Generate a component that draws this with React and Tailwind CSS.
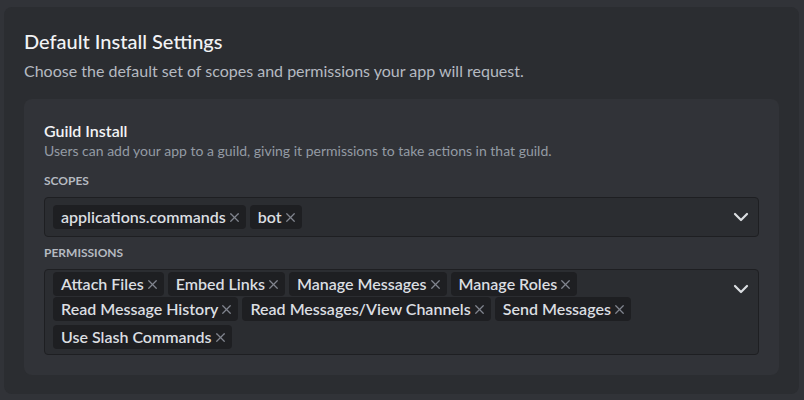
import { ChevronDown, X } from "lucide-react";

const font = { fontFamily: 'Lato, "Noto Sans", sans-serif' };

function Tag({ label }) {
  return (
    <span className="flex h-6 items-center rounded-[4px] bg-[#1e1f22] pl-2 pr-1 text-[16px] font-semibold leading-5 text-[#dbdee1]">
      {label}
      <X className="ml-px h-[15px] w-[15px] text-[#80848e]" strokeWidth={2} />
    </span>
  );
}

export default function App() {
  return (
    <div className="h-[400px] w-[804px] bg-[#313338] pl-1 pr-[5px] pt-[7px]" style={font}>
      <div className="rounded-lg bg-[#2b2d31] px-5 pb-[19px] pt-[22px]">
        <h2 className="text-[20px] font-medium leading-6 text-[#f2f3f5]">Default Install Settings</h2>
        <p className="mt-[8px] text-[16px] leading-5 text-[#b5bac1]">
          Choose the default set of scopes and permissions your app will request.
        </p>
        <div className="mt-[18px] rounded-lg bg-[#313338] px-5 pb-5 pt-[22px]">
          <h3 className="text-[16px] font-semibold leading-5 text-[#f2f3f5]">Guild Install</h3>
          <p className="mt-[1px] text-[14px] leading-[18px] text-[#949ba4]">
            Users can add your app to a guild, giving it permissions to take actions in that guild.
          </p>
          <div className="mt-[13px] text-[12px] font-bold uppercase leading-4 text-[#b5bac1]">Scopes</div>
          <div className="mt-[8px] flex items-center justify-between rounded-[4px] border border-[#1e1f22] bg-[#2b2d31] py-[7px] pl-2 pr-[5px]">
            <div className="flex gap-1">
              <Tag label="applications.commands" />
              <Tag label="bot" />
            </div>
            <ChevronDown className="h-6 w-6 text-[#dbdee1]" strokeWidth={2.2} />
          </div>
          <div className="mt-[8px] text-[12px] font-bold uppercase leading-4 text-[#b5bac1]">Permissions</div>
          <div className="mt-[8px] flex items-start justify-between rounded-[4px] border border-[#1e1f22] bg-[#2b2d31] pb-[5px] pl-2 pr-[5px] pt-[2px]">
            <div className="flex flex-col gap-[1px]">
              <div className="flex gap-1">
                <Tag label="Attach Files" />
                <Tag label="Embed Links" />
                <Tag label="Manage Messages" />
                <Tag label="Manage Roles" />
              </div>
              <div className="flex gap-1">
                <Tag label="Read Message History" />
                <Tag label="Read Messages/View Channels" />
                <Tag label="Send Messages" />
              </div>
              <div className="mt-[3px] flex gap-1">
                <Tag label="Use Slash Commands" />
              </div>
            </div>
            <ChevronDown className="mt-[5px] h-6 w-6 text-[#dbdee1]" strokeWidth={2.2} />
          </div>
        </div>
      </div>
    </div>
  );
}
